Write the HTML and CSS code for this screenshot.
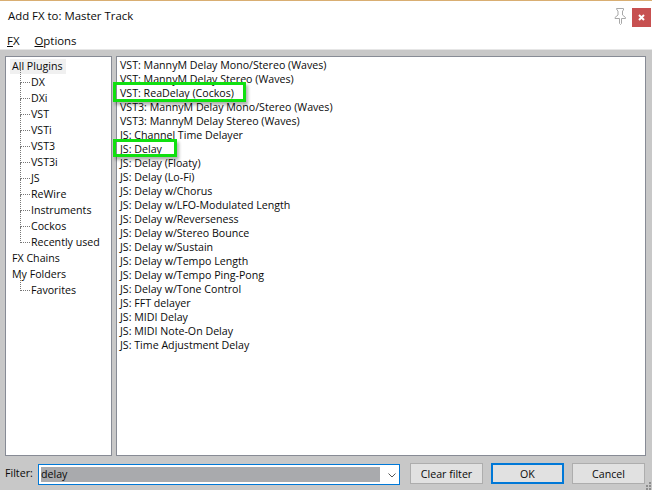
FILE: index.html
```html
<!DOCTYPE html>
<html lang="en">
<head>
<meta charset="utf-8">
<title>Add FX to: Master Track</title>
<link rel="stylesheet" href="styles.css">
</head>
<body>
<div class="window">
  <header class="titlebar">
    <span class="title">Add FX to: Master Track</span>
    <svg class="pin" width="16" height="17" viewBox="0 0 16 17"><path d="M4.500 .5h7v1.500l-1 1v4l3 2.500v1h-4v5l-1 1-1-1v-5h-4.500v-1l3-2.500v-4l-1-1z" fill="#fff" stroke="#a8a8a8"/></svg>
    <div class="close"><svg width="7" height="7" viewBox="0 0 7 7"><path d="M1 1l5 5M6 1l-5 5" stroke="#fff" stroke-width="2"/></svg></div>
  </header>
  <nav class="menubar">
    <span class="menu"><u>F</u>X</span>
    <span class="menu"><u>O</u>ptions</span>
  </nav>
  <main class="content">
    <ul class="tree">
      <li class="root selected"><span>All Plugins</span></li>
      <li class="leaf">DX</li>
      <li class="leaf">DXi</li>
      <li class="leaf">VST</li>
      <li class="leaf">VSTi</li>
      <li class="leaf">VST3</li>
      <li class="leaf">VST3i</li>
      <li class="leaf">JS</li>
      <li class="leaf">ReWire</li>
      <li class="leaf">Instruments</li>
      <li class="leaf">Cockos</li>
      <li class="leaf last">Recently used</li>
      <li class="root"><span>FX Chains</span></li>
      <li class="root"><span>My Folders</span></li>
      <li class="leaf last">Favorites</li>
    </ul>
    <ul class="list">
      <li>VST: MannyM Delay Mono/Stereo (Waves)</li>
      <li>VST: MannyM Delay Stereo (Waves)</li>
      <li class="mark mark-wide">VST: ReaDelay (Cockos)</li>
      <li>VST3: MannyM Delay Mono/Stereo (Waves)</li>
      <li>VST3: MannyM Delay Stereo (Waves)</li>
      <li>JS: Channel Time Delayer</li>
      <li class="mark mark-narrow">JS: Delay</li>
      <li>JS: Delay (Floaty)</li>
      <li>JS: Delay (Lo-Fi)</li>
      <li>JS: Delay w/Chorus</li>
      <li>JS: Delay w/LFO-Modulated Length</li>
      <li>JS: Delay w/Reverseness</li>
      <li>JS: Delay w/Stereo Bounce</li>
      <li>JS: Delay w/Sustain</li>
      <li>JS: Delay w/Tempo Length</li>
      <li>JS: Delay w/Tempo Ping-Pong</li>
      <li>JS: Delay w/Tone Control</li>
      <li>JS: FFT delayer</li>
      <li>JS: MIDI Delay</li>
      <li>JS: MIDI Note-On Delay</li>
      <li>JS: Time Adjustment Delay</li>
    </ul>
  </main>
  <footer class="filterbar">
    <label class="filter-label">Filter:</label>
    <div class="combo">
      <span class="combo-value"><span>delay</span></span>
      <svg class="chevron" width="8" height="5" viewBox="0 0 8 5"><path d="M.5 .5l3.500 3.500 3.500-3.500" fill="none" stroke="#555"/></svg>
    </div>
    <button class="btn btn-clear">Clear filter</button>
    <button class="btn btn-ok">OK</button>
    <button class="btn btn-cancel">Cancel</button>
    <svg class="grip" width="7" height="9" viewBox="0 0 7 9"><path d="M4 1h2v2h-2zM1 4h2v2h-2zM4 4h2v2h-2zM1 7h2v2h-2zM4 7h2v2h-2z" fill="#8e8e8e"/></svg>
  </footer>
</div>
</body>
</html>
```
FILE: styles.css
```css
*, *::before, *::after { box-sizing: border-box; }
html, body { margin: 0; padding: 0; }
body { width: 652px; height: 490px; overflow: hidden; font-family: "Open Sans", "Noto Sans", sans-serif; font-size: 10.65px; color: #0a0a0a; }
.window { width: 652px; height: 490px; display: flex; flex-direction: column; background: #c8c8c8; }
.titlebar { height: 32px; flex: none; display: flex; align-items: flex-start; background: #fff; border-top: 1px solid #d9ae72; padding: 7px 1px 0 8px; }
.title { font-size: 11.4px; line-height: 16px; flex: 1; }
.pin { margin-right: 4px; }
.close { width: 19px; height: 19px; background: #c75050; display: flex; align-items: center; justify-content: center; }
.menubar { height: 18px; flex: none; background: #fff; border-bottom: 1px solid #e6e6e6; display: flex; gap: 15px; padding: 1px 7px; font-size: 11.4px; line-height: 16px; }
.content { height: 406px; flex: none; display: flex; gap: 4px; padding: 6px 6px 0 5px; }
ul { list-style: none; margin: 0; padding: 0; background: #fff; border: 1px solid #878b95; height: 400px; }
.tree { width: 107px; flex: none; padding: 2px 0 0 6px; }
.tree li { height: 16px; line-height: 14px; white-space: nowrap; }
.root span { display: inline-block; padding: 0 2px 0 0; line-height: 14px; height: 15px; }
.selected span { background: #f0f0f0; margin-left: -2px; padding-left: 2px; padding-right: 3px; }
.leaf { position: relative; padding-left: 19px; }
.leaf::before { content: ""; position: absolute; left: 8px; top: -8px; height: 16px; width: 10px; border-left: 1px dotted #777; border-bottom: 1px dotted #777; }
.list { flex: 1; padding: 1px 0 0 3px; }
.list li { height: 14px; line-height: 14px; white-space: nowrap; position: relative; }
.mark::after { content: ""; position: absolute; left: -7px; border: 3px solid #10e010; box-shadow: 2px 3px 3px rgba(0,0,0,.3); }
.mark-wide::after { top: -4px; width: 133px; height: 20px; }
.mark-narrow::after { top: -3px; width: 64px; height: 18px; }
.filterbar { flex: 1; display: flex; align-items: flex-start; padding: 7px 0 0 5px; position: relative; }
.filter-label { width: 33px; line-height: 20px; }
.combo { width: 362px; height: 21px; margin-top: 1px; border: 1px solid #0078d7; background: #fff; padding: 2px; display: flex; align-items: stretch; }
.combo-value { flex: 1; background: #a9aaad; line-height: 15px; }
.chevron { margin: 6px 1px 0 8px; }
.btn { height: 21px; width: 73px; padding: 0; font: inherit; color: #0a0a0a; background: #e1e1e1; border: 1px solid #adadad; }
.btn-clear { margin-left: 10px; }
.btn-ok { margin-left: 8px; border: 2px solid #0078d7; }
.btn-cancel { margin-left: 8px; }
.grip { position: absolute; right: 0; bottom: 0; }
```
